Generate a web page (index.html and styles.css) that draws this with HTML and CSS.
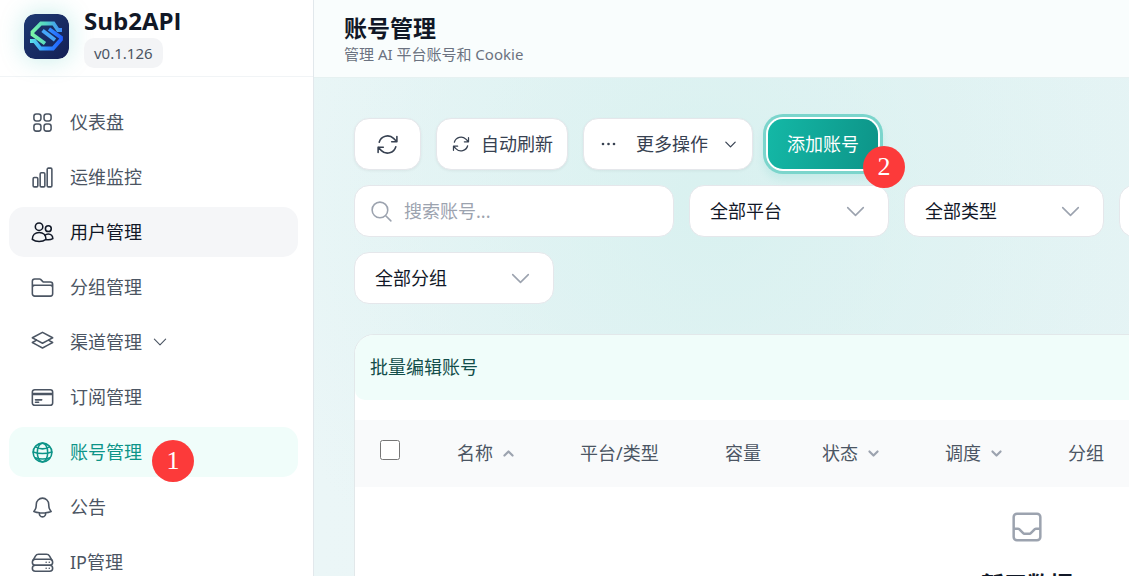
FILE: index.html
```html
<!DOCTYPE html>
<html lang="zh-CN">
<head>
<meta charset="utf-8">
<meta name="viewport" content="width=device-width, initial-scale=1">
<title>账号管理 - Sub2API</title>
<link rel="stylesheet" href="styles.css">
</head>
<body>
<svg class="defs" aria-hidden="true">
  <symbol id="i-down" viewBox="0 0 24 24"><path d="M19.5 8.25l-7.5 7.5-7.5-7.5"/></symbol>
  <symbol id="i-up" viewBox="0 0 24 24"><path d="M4.5 15.75l7.5-7.5 7.5 7.5"/></symbol>
  <symbol id="i-refresh" viewBox="0 0 24 24"><path d="M16.023 9.348h4.992v-.001M2.985 19.644v-4.992m0 0h4.992m-4.993 0l3.181 3.183a8.25 8.25 0 0013.803-3.7M4.031 9.865a8.25 8.25 0 0113.803-3.7l3.181 3.182m0-4.991v4.99"/></symbol>
</svg>
<div class="app">
  <aside class="sidebar">
    <div class="brand">
      <svg class="logo" viewBox="0 0 45 45" aria-hidden="true">
        <defs>
          <linearGradient id="bg" x1="0" y1="0" x2="1" y2="1"><stop offset="0" stop-color="#1d3a72"/><stop offset="1" stop-color="#141f56"/></linearGradient>
          <linearGradient id="top" gradientUnits="userSpaceOnUse" x1="7" y1="18" x2="38" y2="14"><stop offset="0" stop-color="#7cf7a4"/><stop offset=".5" stop-color="#52d4c4"/><stop offset="1" stop-color="#3b86ff"/></linearGradient>
          <linearGradient id="low" gradientUnits="userSpaceOnUse" x1="6" y1="26" x2="38" y2="30"><stop offset="0" stop-color="#5ee6e6"/><stop offset=".5" stop-color="#3394ff"/><stop offset="1" stop-color="#1f5cff"/></linearGradient>
        </defs>
        <rect width="45" height="45" rx="11" fill="url(#bg)"/>
        <path d="M38 16h-4l-4.500-6.500H17L8.500 18v2.500L21 29.500" fill="none" stroke="url(#top)" stroke-width="3.800"/>
        <path d="M6 27h4.500l6 7.500h12.500L37 25.500v-2L25 15" fill="none" stroke="url(#low)" stroke-width="3.800"/>
        <path d="M18.500 16.500l12.500 9.500" stroke="#46a7f8" stroke-width="3.800"/>
      </svg>
      <div class="brand-text">
        <span class="brand-name">Sub2API</span>
        <span class="version">v0.1.126</span>
      </div>
    </div>
    <nav class="nav">
      <a class="nav-item" href="#">
        <svg class="icon" viewBox="0 0 24 24"><path d="M3.75 6A2.25 2.25 0 016 3.750h2.250A2.250 2.250 0 0110.500 6v2.250a2.250 2.250 0 01-2.250 2.250H6a2.250 2.250 0 01-2.250-2.250V6zM3.750 15.750A2.250 2.250 0 016 13.500h2.250a2.250 2.250 0 012.250 2.250V18a2.250 2.250 0 01-2.250 2.250H6A2.250 2.250 0 013.750 18v-2.250zM13.500 6a2.250 2.250 0 012.250-2.250H18A2.250 2.250 0 0120.250 6v2.250A2.250 2.250 0 0118 10.500h-2.250a2.250 2.250 0 01-2.250-2.250V6zM13.500 15.750a2.250 2.250 0 012.250-2.250H18a2.250 2.250 0 012.250 2.250V18A2.250 2.250 0 0118 20.250h-2.250A2.250 2.250 0 0113.500 18v-2.250z"/></svg>
        <span>仪表盘</span></a>
      <a class="nav-item" href="#">
        <svg class="icon" viewBox="0 0 24 24"><path d="M3 13.125C3 12.504 3.504 12 4.125 12h2.250c.621 0 1.125.504 1.125 1.125v6.750C7.500 20.496 6.996 21 6.375 21h-2.250A1.125 1.125 0 013 19.875v-6.750zM9.750 8.625c0-.621.504-1.125 1.125-1.125h2.250c.621 0 1.125.504 1.125 1.125v11.250c0 .621-.504 1.125-1.125 1.125h-2.250a1.125 1.125 0 01-1.125-1.125V8.625zM16.500 4.125c0-.621.504-1.125 1.125-1.125h2.250C20.496 3 21 3.504 21 4.125v15.750c0 .621-.504 1.125-1.125 1.125h-2.250a1.125 1.125 0 01-1.125-1.125V4.125z"/></svg>
        <span>运维监控</span></a>
      <a class="nav-item hovered" href="#">
        <svg class="icon" viewBox="0 0 24 24"><circle cx="8.700" cy="6.400" r="3.600"/><circle cx="17.600" cy="8.300" r="2.800"/><path d="M2.200 18.700c0-4 2.800-6.700 6.600-6.700s6.600 2.700 6.600 6.700c-1.800 1.300-4.200 2-6.600 2s-4.900-.700-6.600-2zM14.200 14.900c1-1 2.200-1.400 3.400-1.400 2.500 0 4.300 1.900 4.300 4.400-1.900 1-4.200 1.300-6.500.8"/></svg>
        <span>用户管理</span></a>
      <a class="nav-item" href="#">
        <svg class="icon" viewBox="0 0 24 24"><path d="M2.250 12.750V12A2.250 2.250 0 014.500 9.750h15A2.250 2.250 0 0121.750 12v.750M2.250 9.750V6A2.250 2.250 0 014.500 3.750h4.629c.398 0 .779.158 1.060.440l2.122 2.120c.281.282.663.440 1.060.440H19.500A2.250 2.250 0 0121.750 9v9A2.250 2.250 0 0119.500 20.250h-15A2.250 2.250 0 012.250 18V9.750h19.500"/></svg>
        <span>分组管理</span></a>
      <a class="nav-item" href="#">
        <svg class="icon" viewBox="0 0 24 24"><path d="M6.429 9.750L2.250 12l4.179 2.250m0-4.500l5.571 3 5.571-3m-11.142 0L2.250 7.500 12 2.250l9.750 5.250-4.179 2.250m0 0L21.750 12l-4.179 2.250m0 0L12 17.250l-5.571-3"/></svg>
        <span>渠道管理</span>
        <svg class="icon expand"><use href="#i-down"/></svg></a>
      <a class="nav-item" href="#">
        <svg class="icon" viewBox="0 0 24 24"><path d="M2.250 8.250h19.500M2.250 9h19.500m-16.500 5.250h6m-6 2.250h3m-3.750 3h15a2.250 2.250 0 002.250-2.250V6.750A2.250 2.250 0 0019.500 4.500h-15a2.250 2.250 0 00-2.250 2.250v10.500A2.250 2.250 0 004.500 19.500z"/></svg>
        <span>订阅管理</span></a>
      <a class="nav-item active" href="#" aria-current="page">
        <svg class="icon" viewBox="0 0 24 24"><circle cx="12" cy="12" r="9"/><ellipse cx="12" cy="12" rx="5" ry="9"/><path d="M5.200 6.600Q12 10.500 18.800 6.600M3 11.500Q12 14.500 21 11.500M4.800 17Q12 19.500 19.200 17"/></svg>
        <span>账号管理</span>
        <b class="step step-one">1</b></a>
      <a class="nav-item" href="#">
        <svg class="icon" viewBox="0 0 24 24"><path d="M14.857 17.082a23.848 23.848 0 005.454-1.310A8.967 8.967 0 0118 9.750V9A6 6 0 006 9v.750a8.967 8.967 0 01-2.312 6.022c1.733.640 3.560 1.085 5.455 1.310m5.714 0a24.255 24.255 0 01-5.714 0m5.714 0a3 3 0 11-5.714 0"/></svg>
        <span>公告</span></a>
      <a class="nav-item" href="#">
        <svg class="icon" viewBox="0 0 24 24"><rect x="2.250" y="8.800" width="19.500" height="5.800" rx="2.900"/><rect x="2.250" y="14.600" width="19.500" height="5.800" rx="2.900"/><path d="M3 9.800l2.200-4A3.400 3.400 0 018.200 4h7.600a3.400 3.400 0 013 1.800l2.200 4M15.500 11.700h.01M18.500 11.700h.01M15.500 17.500h.01M18.500 17.500h.01"/></svg>
        <span>IP管理</span></a>
    </nav>
  </aside>

  <div class="main">
    <header class="topbar">
      <h1>账号管理</h1>
      <p>管理 AI 平台账号和 Cookie</p>
    </header>
    <main class="content">
      <div class="row">
        <button class="btn btn-refresh" aria-label="刷新"><svg class="icon"><use href="#i-refresh"/></svg></button>
        <button class="btn"><svg class="icon icon-md"><use href="#i-refresh"/></svg>自动刷新</button>
        <button class="btn btn-more"><svg class="icon icon-md dots" viewBox="0 0 20 20"><circle cx="5" cy="10" r="1.300"/><circle cx="10.500" cy="10" r="1.300"/><circle cx="16" cy="10" r="1.300"/></svg>更多操作<svg class="icon icon-sm"><use href="#i-down"/></svg></button>
        <button class="btn btn-primary">添加账号<b class="step step-two">2</b></button>
      </div>
      <div class="row">
        <label class="search">
          <svg class="icon" viewBox="0 0 24 24"><path d="M21 21l-5.197-5.197m0 0A7.500 7.500 0 105.196 5.196a7.500 7.500 0 0010.607 10.607z"/></svg>
          <input type="text" placeholder="搜索账号..." aria-label="搜索账号">
        </label>
        <label class="select"><select aria-label="平台"><option>全部平台</option></select><svg class="icon"><use href="#i-down"/></svg></label>
        <label class="select"><select aria-label="类型"><option>全部类型</option></select><svg class="icon"><use href="#i-down"/></svg></label>
        <label class="select"><select aria-label="状态"><option>全部状态</option></select><svg class="icon"><use href="#i-down"/></svg></label>
      </div>
      <div class="row">
        <label class="select"><select aria-label="分组"><option>全部分组</option></select><svg class="icon"><use href="#i-down"/></svg></label>
      </div>
      <section class="card">
        <div class="bulk">批量编辑账号</div>
        <table class="accounts">
          <colgroup><col class="c-check"><col class="c-name"><col class="c-kind"><col class="c-size"><col class="c-name"><col class="c-name"><col></colgroup>
          <thead>
            <tr>
              <th><input type="checkbox" aria-label="全选"></th>
              <th><span class="sort">名称<svg class="icon"><use href="#i-up"/></svg></span></th>
              <th>平台/类型</th>
              <th>容量</th>
              <th><span class="sort">状态<svg class="icon"><use href="#i-down"/></svg></span></th>
              <th><span class="sort">调度<svg class="icon"><use href="#i-down"/></svg></span></th>
              <th>分组</th>
            </tr>
          </thead>
          <tbody>
            <tr><td colspan="7"><div class="empty">
              <svg class="icon" viewBox="0 0 24 24"><path d="M20 13V6a2 2 0 00-2-2H6a2 2 0 00-2 2v7m16 0v5a2 2 0 01-2 2H6a2 2 0 01-2-2v-5m16 0h-2.586a1 1 0 00-.707.293l-2.414 2.414a1 1 0 01-.707.293h-3.172a1 1 0 01-.707-.293l-2.414-2.414A1 1 0 006.586 13H4"/></svg>
              <p>暂无数据</p>
            </div></td></tr>
          </tbody>
        </table>
      </section>
    </main>
  </div>
</div>
</body>
</html>
```
FILE: styles.css
```css
* { box-sizing: border-box; }
body {
  margin: 0;
  height: 100vh;
  overflow: hidden;
  font: 18px/25px "Noto Sans", "Noto Sans CJK SC", sans-serif;
  color: #4b5563;
  background: #e8f5f5;
}
h1, p { margin: 0; }
button, input, select { font: inherit; color: inherit; }
.defs { display: none; }
.icon {
  flex: none;
  width: 25px;
  height: 25px;
  fill: none;
  stroke: currentColor;
  stroke-width: 1.5;
  stroke-linecap: round;
  stroke-linejoin: round;
}
.icon-md { width: 20px; height: 20px; }
.icon-sm { width: 15px; height: 15px; stroke-width: 2; }
.app { display: flex; height: 100vh; }

.sidebar {
  flex: none;
  width: 314px;
  overflow: hidden;
  background: #fff;
  border-right: 1px solid #e2e8ec;
}
.brand {
  display: flex;
  align-items: center;
  gap: 15px;
  height: 77px;
  padding: 0 24px 3px;
  border-bottom: 1px solid #f1f4f6;
}
.logo {
  width: 45px;
  height: 45px;
  border-radius: 11px;
  box-shadow: 0 0 24px rgba(20, 184, 166, .25);
}
.brand-text { display: flex; flex-direction: column; align-items: flex-start; gap: 2px; }
.brand-name { font: 700 24px/30px "Open Sans", sans-serif; color: #111827; }
.version {
  padding: 3px 10px;
  border-radius: 10px;
  background: #f3f4f6;
  font-size: 15px;
  line-height: 24px;
}
.nav { display: flex; flex-direction: column; gap: 5px; padding: 20px 15px 20px 9px; }
.nav-item {
  position: relative;
  display: flex;
  align-items: center;
  gap: 15px;
  height: 50px;
  padding: 0 21px;
  border-radius: 15px;
  color: #4b5563;
  text-decoration: none;
}
.nav-item.hovered { background: #f5f6f8; color: #111827; }
.nav-item.active { background: #f0fdfa; color: #0d9488; }
.expand { width: 18px; height: 18px; margin-left: -6px; }

.step {
  position: absolute;
  width: 42px;
  height: 42px;
  border-radius: 50%;
  background: #fc3a3a;
  color: #fff;
  font: 26px/42px "Liberation Serif", serif;
  text-align: center;
}
.step-one { left: 143px; top: 13px; }
.step-two { left: 95px; top: 27px; }

.main {
  flex: 1;
  min-width: 0;
  overflow: hidden;
  background:
    radial-gradient(circle at 400px 200px, rgba(210, 239, 237, .7), transparent 480px),
    linear-gradient(90deg, #ebf6f7, #e6f4f5);
}
.topbar {
  height: 78px;
  padding: 14px 30px;
  border-bottom: 1px solid #e6f1f1;
  background: #f9fdfd;
}
.topbar h1 { font-size: 23px; line-height: 28px; font-weight: 700; color: #111827; }
.topbar p { font-size: 15px; line-height: 25px; color: #6b7280; }
.content { display: flex; flex-direction: column; gap: 15px; min-width: 1426px; padding: 40px; }
.row { display: flex; gap: 15px; }

.btn {
  position: relative;
  display: flex;
  align-items: center;
  justify-content: center;
  gap: 10px;
  height: 52px;
  padding: 0 14px;
  border: 1px solid #e5e7eb;
  border-radius: 15px;
  background: #fff;
  color: #374151;
  box-shadow: 0 1px 3px rgba(0, 0, 0, .06);
}
.btn-refresh { padding: 0 20px; }
.btn-more { gap: 15px; }
.btn-more .dots { margin-right: 3px; fill: currentColor; stroke: none; }
.btn-primary {
  height: 50px;
  margin: 1px 0;
  padding: 0 19px;
  border: 0;
  background: linear-gradient(100deg, #14b8a6, #0d9488);
  color: #fff;
  box-shadow: 0 0 0 2px #fff, 0 0 0 5px #7bd5cc, 0 6px 10px 4px rgba(20, 184, 166, .12);
}

.search, .select {
  display: flex;
  align-items: center;
  height: 52px;
  border: 1px solid #e5e7eb;
  border-radius: 15px;
  background: #fff;
  color: #9ca3af;
}
.search { width: 320px; gap: 10px; padding: 0 14px; }
.search input { flex: 1; min-width: 0; padding: 0; border: 0; outline: 0; background: none; }
.search input::placeholder { color: #9ca3af; }
.select { width: 200px; padding: 0 20px; }
.select select {
  flex: 1;
  appearance: none;
  padding: 0;
  border: 0;
  outline: 0;
  background: none;
  color: #111827;
}

.card {
  margin-top: 15px;
  overflow: hidden;
  min-height: 600px;
  border: 1px solid #e2e8ea;
  border-radius: 20px;
  background: #fff;
}
.bulk {
  padding: 20px 15px;
  margin-bottom: 20px;
  border-radius: 0 0 10px 10px;
  background: #f0fdfa;
  color: #134e4a;
}
.accounts { width: 100%; table-layout: fixed; border-collapse: collapse; }
.c-check { width: 77px; }
.c-name { width: 123px; }
.c-kind { width: 145px; }
.c-size { width: 97px; }
.accounts th {
  height: 67px;
  padding: 0 0 0 25px;
  background: #f9fafb;
  font-weight: 400;
  text-align: left;
}
.accounts input { display: block; width: 20px; height: 20px; margin: 0 0 7px; }
.sort { display: flex; align-items: center; gap: 9px; }
.sort .icon { width: 13px; height: 13px; stroke-width: 4; color: #9ca3af; }
.accounts td { padding: 20px 0; }
.empty { display: flex; flex-direction: column; align-items: center; gap: 20px; color: #9ca3af; }
.empty .icon { width: 40px; height: 40px; }
.empty p { font-size: 23px; line-height: 35px; font-weight: 600; color: #111827; }
```
